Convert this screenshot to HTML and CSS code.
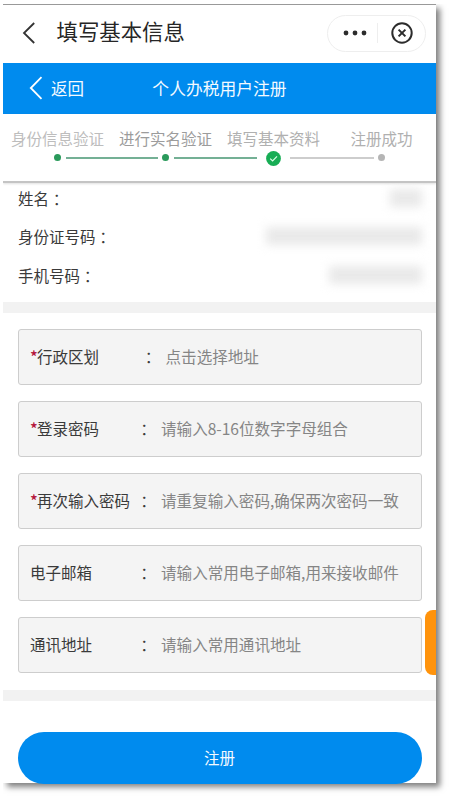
FILE: index.html
```html
<!DOCTYPE html>
<html lang="zh-CN">
<head>
<meta charset="utf-8">
<title>填写基本信息</title>
<link rel="stylesheet" href="styles.css">
</head>
<body>
<main class="phone">
  <header class="titlebar">
    <svg class="titlebar-back" width="14" height="22" viewBox="0 0 14 22"><path d="M12.2 1 2 11l10.200 10" fill="none" stroke="#333" stroke-width="1.800"/></svg>
    <h1 class="titlebar-title">填写基本信息</h1>
    <div class="capsule">
      <svg width="24" height="6" viewBox="0 0 24 6" fill="#2c2c2c"><circle cx="3" cy="3" r="2.400"/><circle cx="12" cy="3" r="2.400"/><circle cx="21" cy="3" r="2.400"/></svg>
      <span class="capsule-divider"></span>
      <svg width="22" height="22" viewBox="0 0 22 22" fill="none" stroke="#2c2c2c" stroke-width="2"><circle cx="11" cy="11" r="9.700"/><path d="M7.600 7.600l6.800 6.800M14.400 7.600l-6.800 6.800"/></svg>
    </div>
  </header>
  <nav class="navbar">
    <div class="navbar-back">
      <svg width="14" height="24" viewBox="0 0 14 24"><path d="M12.500 1.200 1.800 12l10.700 10.800" fill="none" stroke="#fff" stroke-width="1.800"/></svg>
      <span>返回</span>
    </div>
    <div class="navbar-title">个人办税用户注册</div>
  </nav>
  <section class="steps">
    <div class="step step-past"><span class="step-label">身份信息验证</span><div class="track"><i></i><b class="dot"></b><i class="line line-green"></i></div></div>
    <div class="step step-strong"><span class="step-label">进行实名验证</span><div class="track"><i class="line line-green"></i><b class="dot"></b><i class="line line-green"></i></div></div>
    <div class="step step-current"><span class="step-label">填写基本资料</span><div class="track"><i class="line line-green"></i><svg class="check" width="15" height="15" viewBox="0 0 15 15"><circle cx="7.500" cy="7.500" r="7.400" fill="#17ad55"/><path d="M4.200 7.600l2.400 2.300 4.400-4.500" fill="none" stroke="#d9ffe6" stroke-width="1.200"/></svg><i class="line line-gray"></i></div></div>
    <div class="step step-next"><span class="step-label">注册成功</span><div class="track"><i class="line line-gray"></i><b class="dot dot-gray"></b><i></i></div></div>
  </section>
  <section class="info">
    <div class="info-row"><div>姓名<span class="colon">：</span></div><span class="mask mask-name"></span></div>
    <div class="info-row"><div>身份证号码<span class="colon">：</span></div><span class="mask mask-id"></span></div>
    <div class="info-row"><div>手机号码<span class="colon">：</span></div><span class="mask mask-phone"></span></div>
  </section>
  <div class="band"></div>
  <section class="form">
    <div class="field field-select"><span class="label"><em>*</em>行政区划</span><span class="colon">：</span><span class="hint">点击选择地址</span></div>
    <div class="field"><span class="label"><em>*</em>登录密码</span><span class="colon">：</span><span class="hint">请输入8-16位数字字母组合</span></div>
    <div class="field"><span class="label"><em>*</em>再次输入密码</span><span class="colon">：</span><span class="hint">请重复输入密码,确保两次密码一致</span></div>
    <div class="field"><span class="label">电子邮箱</span><span class="colon">：</span><span class="hint">请输入常用电子邮箱,用来接收邮件</span></div>
    <div class="field"><span class="label">通讯地址</span><span class="colon">：</span><span class="hint">请输入常用通讯地址</span></div>
  </section>
  <div class="band"></div>
  <div class="submit">注册</div>
  <span class="side-tab"></span>
</main>
</body>
</html>
```

FILE: styles.css
```css
* { box-sizing: border-box; }

body {
  margin: 0;
  height: 800px;
  padding: 4px 14px 17px 3px;
  overflow: hidden;
  background: #fff;
  font-family: "Noto Sans CJK SC", sans-serif;
  font-size: 15.5px;
  color: #3a3a3a;
}

.phone {
  position: relative;
  display: flex;
  flex-direction: column;
  height: 779px;
  background: #fff;
  border-top: 1px solid #999;
  box-shadow: 4px 4px 6px rgba(0, 0, 0, .5);
  clip-path: inset(0 -14px -17px 0);
}

/* App title bar */
.titlebar {
  display: flex;
  align-items: center;
  flex: none;
  height: 57.5px;
  padding: 0 10px 0 19px;
}
.titlebar-back { position: relative; top: -1px; }
.titlebar-title {
  margin: -5px 0 0 20.5px;
  font-size: 21.4px;
  line-height: 30px;
  font-weight: 400;
  color: #262626;
}
.capsule {
  display: flex;
  align-items: center;
  justify-content: space-between;
  width: 99px;
  height: 37px;
  margin: -1px 0 0 auto;
  padding: 0 12px 0 15px;
  border: 1px solid #eee;
  border-radius: 19px;
}
.capsule-divider { width: 1px; height: 20px; margin-right: 3px; background: #eee; }

/* Blue navigation */
.navbar {
  display: grid;
  grid-template-columns: 1fr auto 1fr;
  align-items: center;
  flex: none;
  height: 51.5px;
  padding: 0 25px;
  background: #008bee;
  color: #f4faff;
  font-size: 16.5px;
}
.navbar-back { display: flex; align-items: center; gap: 8px; padding-left: 1px; }
.navbar-title { font-size: 16.8px; }

/* Progress */
.steps {
  position: relative;
  display: grid;
  grid-template-columns: repeat(4, 108px);
  flex: none;
  height: 69px;
  padding: 13px 0 0 .5px;
  border-bottom: 2px solid #c4c4c4;
  box-shadow: 0 1px 2px rgba(0, 0, 0, .12);
}
.step { display: flex; flex-direction: column; align-items: center; color: #b0b0b0; }
.step-past { color: #bdbdbd; }
.step-strong { color: #9c9c9c; }
.step-label { height: 23px; line-height: 22px; }
.track {
  display: grid;
  grid-template-columns: 1fr auto 1fr;
  align-items: center;
  width: 100%;
  height: 15px;
}
.dot { width: 7px; height: 7px; margin: 0 4.5px; border-radius: 50%; background: #2a9a5b; }
.dot-gray { background: #b5b5b5; }
.line { height: 2px; }
.line-green { background: #74b095; }
.line-gray { background: #cdcdcd; }
.check { position: relative; top: 1px; margin: 0 9px; }

/* Identity summary */
.info { flex: none; height: 119px; overflow: hidden; }
.info-row {
  display: flex;
  align-items: center;
  justify-content: space-between;
  height: 38.5px;
  padding: 0 14px 0 15px;
}
.info-row:first-child { height: 34px; padding-bottom: 5px; }
.mask { height: 18px; background: #e9e9e9; filter: blur(5px); }
.mask-name { width: 32px; }
.mask-id { width: 156px; }
.mask-phone { width: 93px; }

.band { flex: none; height: 11px; background: #f2f2f2; }

/* Form */
.form {
  display: flex;
  flex-direction: column;
  gap: 16px;
  flex: none;
  height: 377px;
  padding: 16px 14.5px 0;
}
.field {
  display: flex;
  align-items: center;
  flex: none;
  height: 56px;
  padding: 0 0 2px 11.5px;
  background: #f4f4f4;
  border: 1px solid #cdcdcd;
  border-radius: 3px;
}
.label { width: 106px; white-space: nowrap; }
.label em {
  display: inline-block;
  width: 7px;
  font-style: normal;
  font-size: 16px;
  font-weight: 500;
  line-height: 1;
  color: #b5173c;
}
/* Centred full-width colon */
.colon {
  position: relative;
  top: 1px;
  width: 15.5px;
  font-family: "Noto Sans CJK TC", sans-serif;
  font-feature-settings: "locl" 0;
}
.field .colon { left: .5px; }
.hint { margin-left: 9.5px; font-size: 15.57px; color: #858585; white-space: nowrap; }
.field-select .label { width: 110.5px; }

.submit {
  flex: none;
  height: 52px;
  margin: 31px 14.5px 0;
  border-radius: 26px;
  background: #008bee;
  color: #f4faff;
  line-height: 51px;
  text-align: center;
}

.side-tab {
  position: absolute;
  top: 605px;
  right: 0;
  width: 11px;
  height: 65px;
  border-radius: 8px 0 0 8px;
  background: #ff930c;
}
```
